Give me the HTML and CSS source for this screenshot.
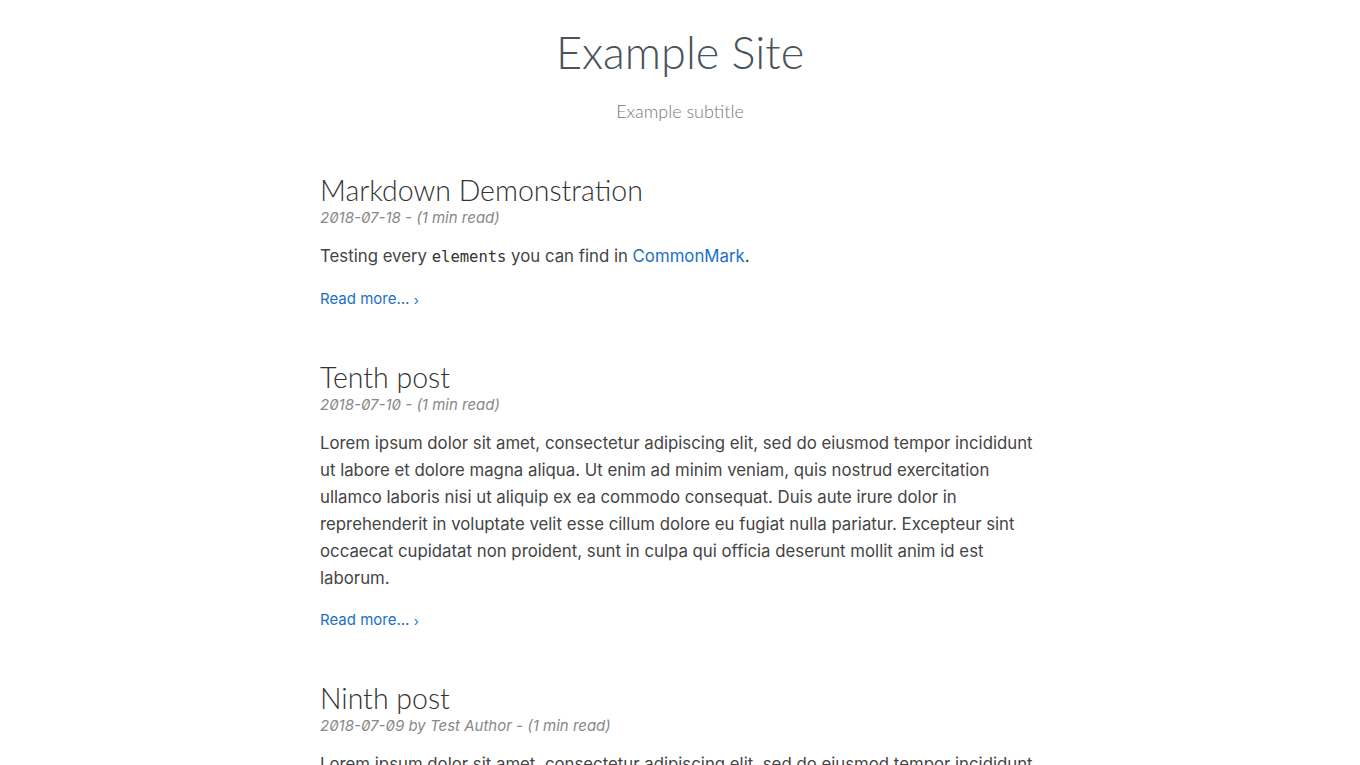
FILE: index.html
```html
<!DOCTYPE html>
<html lang="en">
<head>
<meta charset="utf-8">
<title>Example Site</title>
<link rel="stylesheet" href="styles.css">
</head>
<body>
<header class="site-header">
  <h1 class="site-title">Example Site</h1>
  <p class="site-subtitle">Example subtitle</p>
</header>
<main class="posts">
  <article class="post">
    <h2 class="post-title">Markdown Demonstration</h2>
    <div class="post-meta">2018-07-18 - (1 min read)</div>
    <p class="post-summary">Testing every <code>elements</code> you can find in <a href="#">CommonMark</a>.</p>
    <a class="read-more" href="#">Read more… <span class="chev">›</span></a>
  </article>
  <article class="post">
    <h2 class="post-title">Tenth post</h2>
    <div class="post-meta">2018-07-10 - (1 min read)</div>
    <p class="post-summary">Lorem ipsum dolor sit amet, consectetur adipiscing elit, sed do eiusmod tempor incididunt ut labore et dolore magna aliqua. Ut enim ad minim veniam, quis nostrud exercitation ullamco laboris nisi ut aliquip ex ea commodo consequat. Duis aute irure dolor in reprehenderit in voluptate velit esse cillum dolore eu fugiat nulla pariatur. Excepteur sint occaecat cupidatat non proident, sunt in culpa qui officia deserunt mollit anim id est laborum.</p>
    <a class="read-more" href="#">Read more… <span class="chev">›</span></a>
  </article>
  <article class="post">
    <h2 class="post-title">Ninth post</h2>
    <div class="post-meta">2018-07-09 by Test Author - (1 min read)</div>
    <p class="post-summary">Lorem ipsum dolor sit amet, consectetur adipiscing elit, sed do eiusmod tempor incididunt ut labore et dolore magna aliqua. Ut enim ad minim veniam, quis nostrud exercitation ullamco laboris nisi ut aliquip ex ea commodo consequat. Duis aute irure dolor in reprehenderit in voluptate velit esse cillum dolore eu fugiat nulla pariatur. Excepteur sint occaecat cupidatat non proident, sunt in culpa qui officia deserunt mollit anim id est laborum.</p>
    <a class="read-more" href="#">Read more… <span class="chev">›</span></a>
  </article>
</main>
</body>
</html>
```
FILE: styles.css
```css
html, body {
  margin: 0;
  padding: 0;
  background: #fff;
}
body {
  font-family: Inter, "Liberation Sans", Arial, sans-serif;
  color: #444;
  font-size: 16px;
}
.site-header {
  text-align: center;
  padding-top: 24px;
}
.site-title {
  margin: 0;
  font-family: Lato, "Open Sans", sans-serif;
  font-weight: 300;
  font-size: 45px;
  line-height: 56px;
  color: #4a535c;
}
.site-subtitle {
  margin: 19px 0 0;
  font-family: Lato, sans-serif;
  font-weight: 300;
  font-size: 18px;
  line-height: 24px;
  color: #777;
}
.posts {
  width: 720px;
  margin: 50px auto 0;
}
.post {
  margin-bottom: 50px;
}
.post-title {
  margin: 0;
  font-family: Lato, sans-serif;
  font-weight: 300;
  font-size: 28.5px;
  line-height: 34px;
  color: #333;
}
.post-meta {
  margin-top: 1px;
  font-style: italic;
  font-size: 15px;
  line-height: 20px;
  color: #888;
  font-variant-numeric: slashed-zero;
}
.post-summary {
  margin: 15px 0 17px;
  font-size: 16.8px;
  line-height: 27px;
  color: #444;
}
.post-summary code {
  font-family: "DejaVu Sans Mono", monospace;
  font-size: 15.5px;
  color: #333;
}
a {
  color: #1a6fc9;
  text-decoration: none;
}
.read-more {
  font-size: 15px;
  line-height: 22px;
}
.chev {
  font-size: 13px;
  position: relative;
  top: 1px;
}
```
